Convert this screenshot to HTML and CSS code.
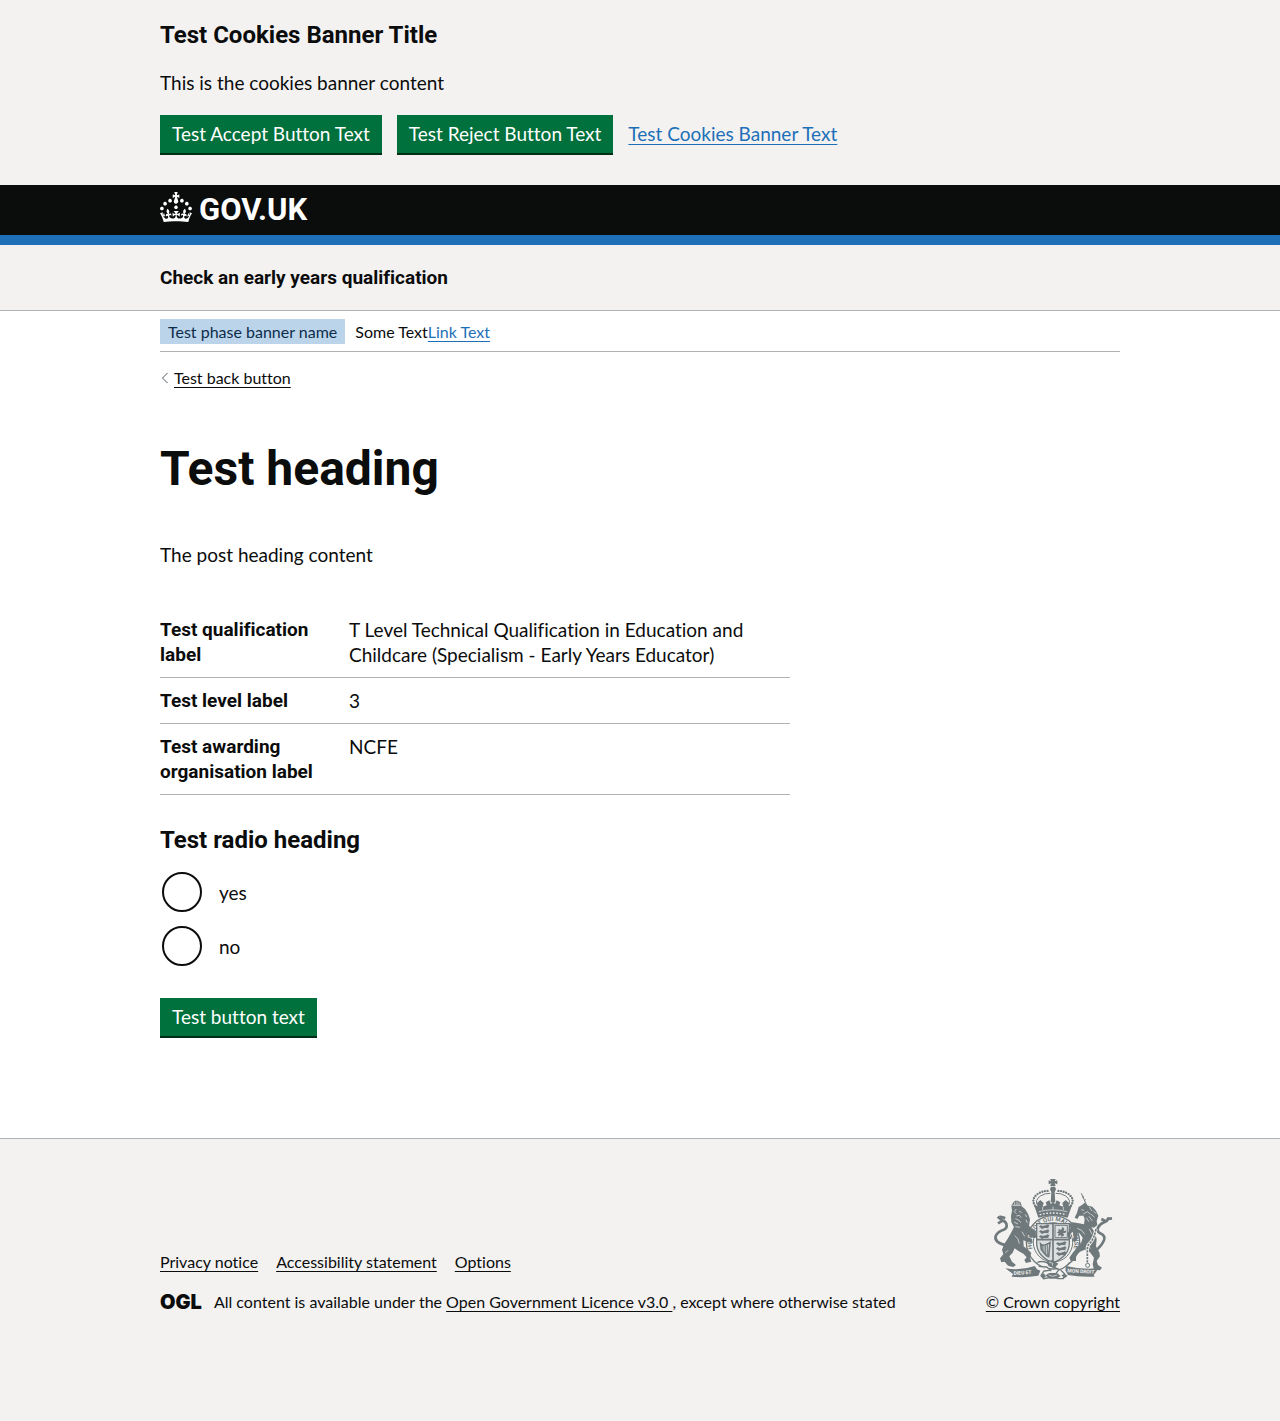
FILE: index.html
```html
<!DOCTYPE html>
<html lang="en">
<head>
<meta charset="utf-8">
<meta name="viewport" content="width=device-width, initial-scale=1">
<title>Check an early years qualification</title>
<link rel="stylesheet" href="styles.css">
</head>
<body>
<section class="cookies" aria-label="Cookies">
  <div class="container">
    <h2 class="heading-m">Test Cookies Banner Title</h2>
    <p class="cookies-text">This is the cookies banner content</p>
    <div class="button-group">
      <button class="button" type="button">Test Accept Button Text</button>
      <button class="button" type="button">Test Reject Button Text</button>
      <a class="link" href="#">Test Cookies Banner Text</a>
    </div>
  </div>
</section>

<header class="header">
  <div class="container">
    <a class="brand" href="#">
      <svg class="brand-crown" viewBox="0 0 32 30" aria-hidden="true"><path d="M22.6 10.4c-1 .4-2-.1-2.4-1-.4-.9.1-2 1-2.4.9-.4 2 .1 2.4 1s-.1 2-1 2.4m-5.9 6.7c-.9.4-2-.1-2.4-1-.4-.9.1-2 1-2.4.9-.4 2 .1 2.4 1s-.1 2-1 2.4m10.8-3.7c-1 .4-2-.1-2.4-1-.4-.9.1-2 1-2.4.9-.4 2 .1 2.4 1s0 2-1 2.4m3.3 4.8c-1 .4-2-.1-2.4-1-.4-.9.1-2 1-2.4.9-.4 2 .1 2.4 1s-.1 2-1 2.4M17 4.7l2.3 1.2V2.5l-2.3.7-.2-.2.9-3h-3.4l.9 3-.2.2c-.1.1-2.3-.7-2.3-.7v3.4L15 4.7c.1.1.1.2.2.2l-1.3 4c-.1.2-.1.4-.1.6 0 1.1.8 2 1.9 2.2h.7c1-.2 1.9-1.1 1.9-2.1 0-.2 0-.4-.1-.6l-1.3-4c-.1-.2 0-.2.1-.3m-7.6 5.7c.9.4 2-.1 2.4-1 .4-.9-.1-2-1-2.4-.9-.4-2 .1-2.4 1s0 2 1 2.4m-5 3c.9.4 2-.1 2.4-1 .4-.9-.1-2-1-2.4-.9-.4-2 .1-2.4 1s.1 2 1 2.4m-3.2 4.8c.9.4 2-.1 2.4-1 .4-.9-.1-2-1-2.4-.9-.4-2 .1-2.4 1s0 2 1 2.4m14.8 11c4.4 0 8.6.3 12.3.8 1.1-4.5 2.4-7 3.7-8.8l-2.5-.9c.2 1.3.3 1.9 0 2.7-.4-.4-.8-1.1-1.1-2.3l-1.2 4c.7-.5 1.3-.8 2-.9-1.1 2.5-2.6 3.1-3.5 3-1.1-.2-1.7-1.2-1.5-2.1.3-1.2 1.5-1.5 2.1-.1 1.1-2.3-.8-3-2-2.3 1.9-1.9 2.1-3.5.6-5.6-2.1 1.6-2.1 3.2-1.2 5.5-1.2-1.4-3.2-.6-2.5 1.6.9-1.4 2.1-.5 1.9.8-.2 1.1-1.7 2.1-3.5 1.9-2.7-.2-2.9-2.1-2.9-3.6.7-.1 1.9.5 2.9 1.9l.4-4.3c-1.1 1.1-2.1 1.4-3.2 1.4.4-1.2 2.1-3 2.1-3h-5.4s1.7 1.9 2.1 3c-1.1 0-2.1-.2-3.2-1.4l.4 4.3c1-1.4 2.2-2 2.9-1.9-.1 1.5-.2 3.4-2.9 3.6-1.9.2-3.4-.8-3.5-1.9-.2-1.3 1-2.2 1.9-.8.7-2.3-1.2-3-2.5-1.6.9-2.2.9-3.9-1.2-5.5-1.5 2-1.3 3.7.6 5.6-1.2-.7-3.1 0-2 2.3.6-1.4 1.8-1.1 2.1.1.2.9-.3 1.9-1.5 2.1-.9.2-2.4-.5-3.5-3 .6 0 1.2.3 2 .9l-1.2-4c-.3 1.1-.7 1.9-1.1 2.3-.3-.8-.2-1.4 0-2.7l-2.9.9C1.3 23 2.6 25.5 3.7 30c3.7-.5 7.9-.8 12.3-.8"/></svg>
      <span>GOV.UK</span>
    </a>
  </div>
</header>

<div class="service">
  <div class="container"><a class="service-name" href="#">Check an early years qualification</a></div>
</div>

<div class="container page">
  <div class="phase">
    <strong class="tag">Test phase banner name</strong>
    <span>Some Text<a class="link" href="#">Link Text</a></span>
  </div>
  <a class="back" href="#">
    <svg class="back-arrow" viewBox="0 0 8 12" aria-hidden="true"><path d="M7 1 2 6l5 5"/></svg>
    <span class="back-text">Test back button</span>
  </a>

  <main class="main">
    <h1 class="heading-xl">Test heading</h1>
    <p class="intro">The post heading content</p>
    <dl class="summary">
      <div class="summary-row"><dt>Test qualification label</dt><dd>T Level Technical Qualification in Education and Childcare (Specialism - Early Years Educator)</dd></div>
      <div class="summary-row"><dt>Test level label</dt><dd>3</dd></div>
      <div class="summary-row"><dt>Test awarding organisation label</dt><dd>NCFE</dd></div>
    </dl>
    <form>
      <fieldset class="radios">
        <legend class="heading-m">Test radio heading</legend>
        <div class="radio"><input type="radio" id="answer-yes" name="answer" value="yes"><label for="answer-yes">yes</label></div>
        <div class="radio"><input type="radio" id="answer-no" name="answer" value="no"><label for="answer-no">no</label></div>
      </fieldset>
      <button class="button" type="button">Test button text</button>
    </form>
  </main>
</div>

<footer class="footer">
  <div class="container footer-row">
    <div class="footer-main">
      <nav class="footer-links" aria-label="Support links">
        <a href="#">Privacy notice</a>
        <a href="#">Accessibility statement</a>
        <a href="#">Options</a>
      </nav>
      <div class="licence">
        <span class="ogl">OGL</span>
        <span>All content is available under the <a href="#">Open Government Licence v3.0 </a>, except where otherwise stated</span>
      </div>
    </div>
    <div class="copyright">
      <svg class="crest" viewBox="38 42 375 306" aria-hidden="true">
        <defs>
          <path id="garter" d="M178 273A64 64 0 1 1 276 273"/>
          <!-- three walking lions, used in two quarters of the shield -->
          <path id="lions" class="ink" d="M3 9q6-7 10-2l10-2 7-3 5 5-5 3 3 4-8-1-9 1-4 3-3-4zM3 24q6-7 10-2l10-2 7-3 5 5-5 3 3 4-8-1-9 1-4 3-3-4zM3 39q6-7 10-2l10-2 7-3 5 5-5 3 3 4-8-1-9 1-4 3-3-4z"/>
        </defs>
        <!-- imperial crown -->
        <path class="ink" d="M218 42h17l-3 7 8-3v12l-8-3 3 8h-17l4-8-8 3V46l8 3zM221 65h12l3 8-4 9 2 30h-14l2-30-4-9z"/>
        <path class="pearls" d="M173 122q-13-20 8-35 17-11 36-9M281 122q13-20-8-35-17-11-36-9"/>
        <path class="line" d="M181 122q-10-16 8-29 14-9 30-8M273 122q10-16-8-29-14-9-30-8"/>
        <path class="ink" d="M170 120l11 4-2-10 10-9 10 9-3 11 12-4-3-9 11-6 5 12 6-10 6 10 5-12 11 6-3 9 12 4-3-11 10-9 10 9-2 10 11-4-13 38q-44-13-88 0z"/>
        <path class="paper-line" d="M184 140q43-11 86 0"/>
        <path class="pearls-paper" d="M187 149q40-10 80 0"/>
        <path class="paper-line" d="M196 126v9m31-10v9m31-8v9"/>
        <!-- garter and its motto -->
        <circle class="band" cx="227" cy="232" r="80"/>
        <circle class="line" cx="227" cy="232" r="59"/>
        <text class="motto"><textPath href="#garter" startOffset="50%">HONI SOIT QUI MAL Y PENSE</textPath></text>
        <!-- shield -->
        <path class="shield" d="M178 176h98v58q0 40-49 59-49-19-49-59z"/>
        <path class="line-wide" d="M227 176v115M178 224h98"/>
        <use href="#lions" x="182" y="176"/>
        <use href="#lions" x="233" y="227"/>
        <path class="line" d="M233 181h37v37h-37z"/>
        <path class="ink" d="M243 191l8 4 5-10 5 6-2 8 8-3-2 7-8 2 4 6-8 5-3-6-8 4 2-9-6-2 6-4z"/>
        <path class="line-wide" d="M190 237q8 9 28-4l-4 42q-7 0-22-22z"/>
        <path class="line" d="M195 241v15m5-14v21m5-22v29m5-31v33"/>
        <!-- lion -->
        <path class="ink" d="M104 137L102 122 107 113 113 107 121 107 130 112 133 124 143 132 152 146 158 163 155 182 164 191 176 199 174 207 180 213 173 220 160 216 148 205 150 216 164 222 166 234 154 232 138 226 139 244 152 254 162 264 158 276 162 290 146 294 141 285 148 277 138 266 122 257 112 250 106 263 96 274 104 290 116 300 108 306 92 302 82 290 72 292 68 280 78 268 74 254 80 238 92 220 102 202 110 186 102 172 101 152z"/>
        <path class="paper-line" d="M105 121h25M112 112v9m7-12v12m6-9v9M117 132l-6 8 6 6m8-8 8 5m-16 10 9-2 6 7m-18 3 10 4 6 8m-20-2 12 6m-8 8 14 2M144 148l4 8m-2 8 4 10"/>
        <path class="paper-line" d="M112 212q12 6 14 24m8-36 8 14M92 256l-8 8"/>
        <path class="tail" d="M84 240Q50 232 55 213q6-14 24-19 12-4 8-18-5-10-13-10l-13-11M62 175l14-8M66 155l18 4"/>
        <!-- unicorn -->
        <path class="line" d="M312 85l16 36M315 97l5-2m0 12 5-3"/>
        <path class="ink" d="M292 158L299 143 304 126 314 120 322 113 332 122 345 125 356 137 363 152 358 168 360 180 350 188 342 186 352 202 358 222 356 244 366 262 368 274 358 288 362 300 374 308 368 316 350 314 346 298 350 278 338 262 322 254 308 260 296 272 296 288 280 288 276 278 284 266 300 246 312 232 316 218 306 204 300 202 300 222 292 232 284 226 290 216 286 200 278 208 282 222 274 222 270 206 280 188 276 178 284 172 300 174 320 178 322 162 318 152 306 152 300 162z"/>
        <path class="paper-line" d="M312 134l8 2m-2 11 12-7 10 8m-4-22 8 12m-2 9 9 10m-3-19 9 8m-22 8 10 14m-18-10 8 12M300 190q16 4 22 18m14-16 8 16m-16 34 12 8"/>
        <path class="tail" d="M354 258q18-14 26-32 5-13-9-20-14-6-9-18 6-12 20-17 12-4 10-14M388 170l-16-8M390 162l14-2"/>
        <path class="chain-edge" d="M356 192q-5 26-16 40-10 8-10 20l0 42"/>
        <path class="chain" d="M356 192q-5 26-16 40-10 8-10 20l0 42"/>
        <circle class="line" cx="331" cy="301" r="6"/>
        <!-- ribbons and knot -->
        <path class="ink" d="M84 310q47 8 88-7l7 10 10 4-6 15q-41 7-80 3l4-8zM266 303q47 12 98 7l-15 20 3 5q-46 2-80-5l-8-14z"/>
        <text class="scroll" x="109" y="330" transform="rotate(-4 109 330)">DIEU ET</text>
        <text class="scroll" x="270" y="322" transform="rotate(3 270 322)">MON DROIT</text>
        <path class="ribbon" d="M180 292q21-8 43 11l23 11q20-6 31-22M184 304l24 2 14 12M245 314l-14 17 10 10h17l4-14-12-12M217 316l-17 2-9 14 8 9 17-3 7-14"/>
        <path class="ink" d="M207 289l19-4 17 11-12 14-17-6zM204 331l12-7 23 0 11 9-12 8-21 0zM190 330l8 10 8-5-6-10zM252 331l10 9 9-8-9-6z"/>
        <path class="paper-line" d="M215 291l11 4-1 7M214 330q12 8 25 0"/>
      </svg>
      <a href="#">© Crown copyright</a>
    </div>
  </div>
</footer>
</body>
</html>
```
FILE: styles.css
```css
* { box-sizing: border-box; }
html { background: #f3f2f1; }
body {
  margin: 0;
  min-height: 100vh;
  display: flex;
  flex-direction: column;
  background: #fff;
  color: #0b0c0c;
  font: 400 19px/25px Lato, "Liberation Sans", sans-serif;
  font-variant-ligatures: none;
}
h1, h2, p, dl, dd, fieldset, legend { margin: 0; padding: 0; }
a { color: inherit; text-decoration: underline; text-decoration-thickness: 1px; text-underline-offset: 3px; }
.container { width: 100%; max-width: 1020px; margin: 0 auto; padding: 0 30px; }
.link { color: #1d70b8; }
.heading-m { font: 700 24px/30px Roboto, sans-serif; }
.heading-xl { font: 700 48px/54px Roboto, sans-serif; }

.cookies { background: #f3f2f1; padding: 20px 0 32px; }
.cookies-text { margin: 20px 0; }
.button-group { display: flex; flex-wrap: wrap; align-items: baseline; gap: 15px; }
.button {
  border: 2px solid transparent;
  padding: 7px 10px 8px;
  background: #00703c;
  box-shadow: 0 2px 0 #002d18;
  color: #fff;
  font: inherit;
  line-height: 19px;
  cursor: pointer;
}

.header { background: #0b0c0c; border-bottom: 10px solid #1d70b8; }
.brand { display: flex; align-items: center; gap: 7px; height: 50px; color: #fff; font: 700 31px/30px Roboto, sans-serif; text-decoration: none; }
.brand-crown { width: 32px; height: 30px; margin-bottom: 6px; fill: currentColor; }

.service { background: #f3f2f1; border-bottom: 1px solid #b1b4b6; padding: 20px 0; }
.service-name { display: block; font-family: Roboto, sans-serif; font-weight: 700; text-decoration: none; }

.phase { display: flex; align-items: center; gap: 10px; padding: 8px 0 7px; border-bottom: 1px solid #b1b4b6; font-size: 16px; }
.tag { padding: 0 8px; background: #bbd4ea; color: #0c2d4a; font-weight: 400; }
.back { display: flex; width: fit-content; align-items: center; gap: 5px; margin-top: 16px; font-size: 16px; line-height: 20px; text-decoration: none; }
.back-text { text-decoration: underline; text-decoration-thickness: 1px; text-underline-offset: 3px; }
.back-arrow { width: 9px; height: 12px; fill: none; stroke: #505a5f; }
.main { max-width: 630px; padding: 54px 0 102px; }
.intro { margin: 46px 0 40px; }

.summary-row { display: flex; padding: 10px 0; border-bottom: 1px solid #b1b4b6; }
.summary-row dt { flex: 0 0 30%; padding-right: 20px; font-family: Roboto, sans-serif; font-weight: 700; }
.summary-row dd { flex: 1; padding-right: 20px; }

.radios { display: grid; gap: 10px; margin: 30px 0; border: 0; }
.radios legend { margin-bottom: 15px; }
.radio { display: flex; align-items: center; height: 44px; }
.radio input { appearance: none; width: 40px; height: 40px; margin: 2px; border: 2px solid #0b0c0c; border-radius: 50%; background: #fff; }
.radio input:checked { background: radial-gradient(#0b0c0c 10px, #fff 11px); }
.radio label { padding: 0 15px; }

.footer { flex: 1; border-top: 1px solid #b1b4b6; background: #f3f2f1; padding: 40px 0 108px; font-size: 16px; line-height: 20px; }
.footer-row { display: flex; justify-content: space-between; align-items: flex-end; }
.footer-links { display: flex; flex-wrap: wrap; gap: 18px; margin-bottom: 20px; }
.licence { display: flex; align-items: center; gap: 12px; }
.ogl { font: 900 20px/20px Inter, sans-serif; }
.copyright { display: flex; flex-direction: column; align-items: center; gap: 11px; }

.crest { width: 125px; height: 102px; }
.crest path, .crest circle { fill: none; }
.crest .ink { fill: #6f797b; }
.crest .line { stroke: #6f797b; stroke-width: 3; }
.crest .band { fill: #f3f2f1; stroke: #6f797b; stroke-width: 4; }
.crest .line-wide { stroke: #6f797b; stroke-width: 5; }
.crest .tail { stroke: #6f797b; stroke-width: 8; stroke-linejoin: round; }
.crest .chain-edge { stroke: #f3f2f1; stroke-width: 10; }
.crest .chain { stroke: #6f797b; stroke-width: 5; stroke-dasharray: 7 3; }
.crest .pearls { stroke: #6f797b; stroke-width: 7; stroke-linecap: round; stroke-dasharray: 0 8; }
.crest .pearls-paper { stroke: #f3f2f1; stroke-width: 4; stroke-dasharray: 5 5; }
.crest .paper-line { stroke: #f3f2f1; stroke-width: 2; }
.crest .shield { fill: #dcdfdf; stroke: #6f797b; stroke-width: 4; }
.crest .ribbon { fill: #f3f2f1; stroke: #6f797b; stroke-width: 4; }
.crest .motto { fill: #6f797b; font: 700 18px Roboto, sans-serif; text-anchor: middle; }
.crest .scroll { fill: #f3f2f1; font: 700 15px Roboto, sans-serif; }
```
